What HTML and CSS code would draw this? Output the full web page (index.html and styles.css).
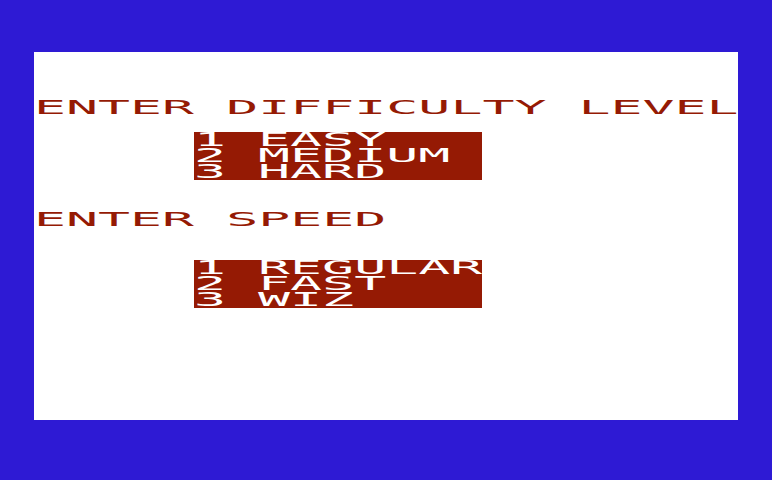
FILE: index.html
```html
<!DOCTYPE html>
<html>
  <head>
    <meta charset="UTF-8">
    <title>Options</title>
    <link rel="stylesheet" href="styles.css">
  </head>
  <body>
    <div class="screen">
      <div class="line prompt first"><span>ENTER DIFFICULTY LEVEL</span></div>

      <div class="menu">
        <div class="line"><span>1 EASY</span></div>
        <div class="line"><span>2 MEDIUM</span></div>
        <div class="line"><span>3 HARD</span></div>
      </div>

      <div class="line prompt"><span>ENTER SPEED</span></div>

      <div class="menu">
        <div class="line"><span>1 REGULAR</span></div>
        <div class="line"><span>2 FAST</span></div>
        <div class="line"><span>3 WIZ</span></div>
      </div>
    </div>
  </body>
</html>
```

FILE: styles.css
```css
body {
  margin: 0;
  background: #2e1ad4;
  height: 480px;
  overflow: hidden;
}

/* 22 columns x 16px rows, each character cell is 32px wide */
.screen {
  margin: 52px 0 0 34px;
  width: 704px;
  height: 368px;
  background: #fff;
  overflow: hidden;
  font-family: "DejaVu Sans Mono", monospace;
  font-size: 19px;
}

.line {
  height: 16px;
  line-height: 16px;
  white-space: pre;
}

.line span {
  display: inline-block;
  transform: translateY(-1px) scaleX(2.8);
  transform-origin: 0 0;
}

.prompt {
  color: #951a04;
  margin-top: 32px;
}

.prompt.first {
  margin-top: 48px;
}

.menu {
  width: 288px;
  margin: 32px 0 0 160px;
  background: #951a04;
  color: #fff;
}

.prompt.first + .menu {
  margin-top: 16px;
}
```
